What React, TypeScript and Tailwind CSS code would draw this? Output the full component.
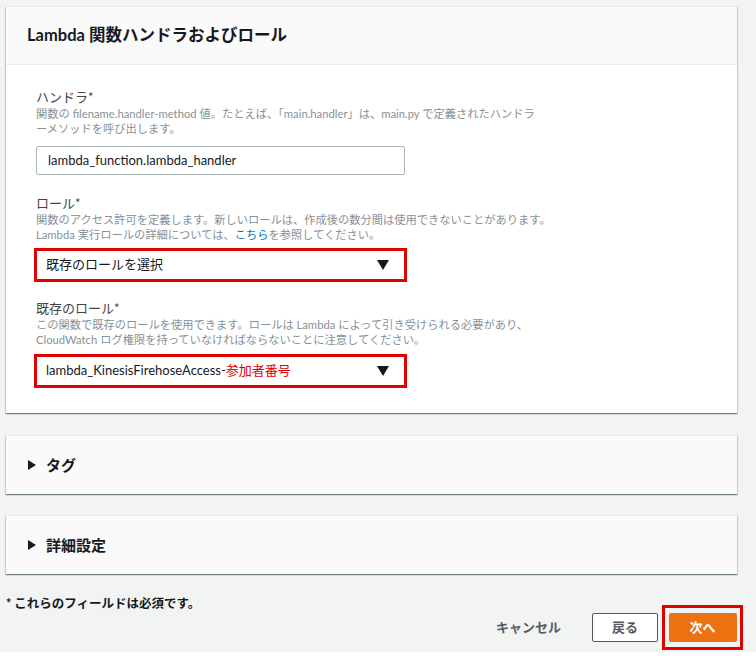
import React from "react";

const font = { fontFamily: 'Lato, "Noto Sans CJK JP", sans-serif' };

function Caret() {
  return (
    <svg width="12" height="10" viewBox="0 0 12 10" className="shrink-0">
      <path d="M0 0 L12 0 L6 10 Z" fill="#16191f" />
    </svg>
  );
}

function Field({
  label,
  children,
  desc,
}: {
  label: string;
  desc: React.ReactNode;
  children: React.ReactNode;
}) {
  return (
    <div className="flex flex-col">
      <div className="text-[13px] leading-[18px] text-[#444]">{label}</div>
      <div className="text-[11.25px] leading-[15px] text-[#879196]">{desc}</div>
      {children}
    </div>
  );
}

function RedSelect({ top, children }: { top: string; children: React.ReactNode }) {
  return (
    <div className={`${top} -ml-[2px] w-[373px] h-[34px] border-[3px] border-[#e00000] bg-white flex items-center pl-[9px] pr-[15px]`}>
      <div className="flex-1 text-[13px] text-[#16191f] whitespace-nowrap">{children}</div>
      <Caret />
    </div>
  );
}

function Collapsed({ title }: { title: string }) {
  return (
    <div className="h-[59px] bg-[#fafafa] border-t border-[#eaeded] shadow-[0_1px_1px_0_rgba(0,28,36,0.4),1px_1px_1px_0_rgba(0,28,36,0.12),-1px_1px_1px_0_rgba(0,28,36,0.12)] flex items-center pl-[22px] gap-[10px]">
      <svg width="8" height="10" viewBox="0 0 8 10">
        <path d="M0 0 L8 5 L0 10 Z" fill="#16191f" />
      </svg>
      <span className="text-[15px] font-bold text-[#16191f]">{title}</span>
    </div>
  );
}

export default function App() {
  return (
    <div style={font} className="w-[756px] h-[656px] bg-white overflow-hidden">
      <div className="h-[652px] bg-[#f2f3f3] pt-[6px] pl-[6px] pr-[19px]">
        {/* Main card */}
        <div className="bg-white shadow-[0_1px_1px_0_rgba(0,28,36,0.4),1px_1px_1px_0_rgba(0,28,36,0.12),-1px_1px_1px_0_rgba(0,28,36,0.12)] border-t border-[#eaeded]">
          <div className="h-[58px] bg-[#fafafa] border-b border-[#eaeded] flex items-center pl-[21px]">
            <h2 className="text-[16.5px] font-bold text-[#16191f]">Lambda 関数ハンドラおよびロール</h2>
          </div>
          <div className="pl-[30px] pt-[23px] pb-[25px] flex flex-col">
            <Field
              label="ハンドラ*"
              desc={
                <>
                  関数の filename.handler-method 値。たとえば、「main.handler」は、main.py で定義されたハンドラ
                  <br />
                  ーメソッドを呼び出します。
                </>
              }
            >
              <div className="mt-[10px] w-[369px] h-[29px] border border-[#aab7b8] rounded-[2px] flex items-center pl-[11px] text-[13px] text-[#16191f]">
                lambda_function.lambda_handler
              </div>
            </Field>
            <div className="mt-[19px]">
              <Field
                label="ロール*"
                desc={
                  <>
                    関数のアクセス許可を定義します。新しいロールは、作成後の数分間は使用できないことがあります。
                    <br />
                    Lambda 実行ロールの詳細については、<span className="text-[#0073bb]">こちら</span>を参照してください。
                  </>
                }
              >
                <RedSelect top="mt-[6px]">既存のロールを選択</RedSelect>
              </Field>
            </div>
            <div className="mt-[17px]">
              <Field
                label="既存のロール*"
                desc={
                  <>
                    この関数で既存のロールを使用できます。ロールは Lambda によって引き受けられる必要があり、
                    <br />
                    CloudWatch ログ権限を持っていなければならないことに注意してください。
                  </>
                }
              >
                <RedSelect top="mt-[7px]">
                  lambda_KinesisFirehoseAccess-<span className="text-[#e00000]">参加者番号</span>
                </RedSelect>
              </Field>
            </div>
          </div>
        </div>

        <div className="mt-[22px] flex flex-col gap-[21px]">
          <Collapsed title="タグ" />
          <Collapsed title="詳細設定" />
        </div>

        <div className="mt-[21px] text-[12.5px] leading-[17px] font-bold text-[#16191f]">* これらのフィールドは必須です。</div>

        <div className="-mt-[7px] flex items-center justify-end">
          <span className="text-[13px] font-bold text-[#545b64] mr-[31px]">キャンセル</span>
          <div className="w-[66px] h-[29px] border border-[#545b64] rounded-[2px] bg-white flex items-center justify-center text-[13px] font-bold text-[#545b64] mr-[4px]">
            戻る
          </div>
          <div className="w-[81px] h-[45px] border-[3px] border-[#e00000] flex items-center justify-center -mr-[6px]">
            <div className="w-[68px] h-[29px] bg-[#ec7211] rounded-[2px] flex items-center justify-center text-[13px] font-bold text-white">
              次へ
            </div>
          </div>
        </div>
      </div>
    </div>
  );
}
